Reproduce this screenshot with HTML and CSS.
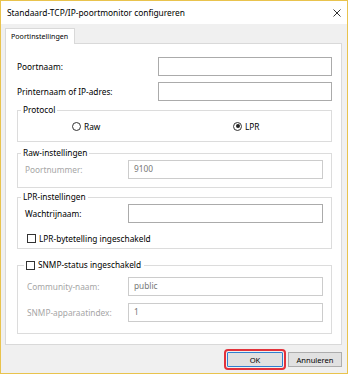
FILE: index.html
```html
<!DOCTYPE html>
<html>
<head>
    <title>Standaard-TCP/IP-poortmonitor configureren</title>
    <link rel="stylesheet" href="styles.css">
</head>
<body>
    <div class="window">
        <div class="titlebar">
            <span class="title">Standaard-TCP/IP-poortmonitor configureren</span>
            <svg class="close" width="8" height="8" viewBox="0 0 8 8">
                <path d="M0.5 0.5 L7.5 7.5 M7.5 0.5 L0.5 7.5" stroke="#333" stroke-width="1" fill="none"/>
            </svg>
        </div>

        <div class="tabs">
            <div class="tab">Poortinstellingen</div>
        </div>

        <div class="panel">
            <div class="row first">
                <span class="label">Poortnaam:</span>
                <div class="field wide"></div>
            </div>
            <div class="row second">
                <span class="label">Printernaam of IP-adres:</span>
                <div class="field wide"></div>
            </div>

            <fieldset class="group protocol">
                <legend>Protocol</legend>
                <div class="radios">
                    <span class="option"><span class="radio"></span>Raw</span>
                    <span class="option"><span class="radio checked"></span>LPR</span>
                </div>
            </fieldset>

            <fieldset class="group raw">
                <legend>Raw-instellingen</legend>
                <div class="body">
                    <div class="row">
                        <span class="label disabled">Poortnummer:</span>
                        <div class="field off">9100</div>
                    </div>
                </div>
            </fieldset>

            <fieldset class="group lpr">
                <legend>LPR-instellingen</legend>
                <div class="body">
                    <div class="row">
                        <span class="label">Wachtrijnaam:</span>
                        <div class="field"></div>
                    </div>
                    <div class="check-row"><span class="checkbox"></span>LPR-bytetelling ingeschakeld</div>
                </div>
            </fieldset>

            <fieldset class="group snmp">
                <legend class="check-legend"><span class="checkbox"></span>SNMP-status ingeschakeld</legend>
                <div class="body">
                    <div class="row">
                        <span class="label disabled">Community-naam:</span>
                        <div class="field off">public</div>
                    </div>
                    <div class="row next">
                        <span class="label disabled">SNMP-apparaatindex:</span>
                        <div class="field off">1</div>
                    </div>
                </div>
            </fieldset>
        </div>

        <div class="footer">
            <button class="btn ok">OK</button>
            <button class="btn cancel">Annuleren</button>
        </div>
    </div>
</body>
</html>
```

FILE: styles.css
```css
body {
    margin: 0;
    font-family: "Noto Sans", "Liberation Sans", sans-serif;
    font-size: 8.3px;
    color: #000;
}

.window {
    width: 348px;
    height: 374px;
    box-sizing: border-box;
    border: 1px solid #e9c34d;
    background-color: #f0f0f0;
    display: flex;
    flex-direction: column;
}

.titlebar {
    height: 23px;
    background-color: #fff;
    display: flex;
    align-items: center;
    justify-content: space-between;
    padding: 0 6px 0 6px;
}
.title {
    font-size: 8.4px;
    color: #000;
}
.close {
    margin-top: 1px;
}

.tabs {
    margin-top: 4px;
    padding-left: 4px;
    display: flex;
}
.tab {
    position: relative;
    z-index: 1;
    height: 15px;
    line-height: 15px;
    margin-bottom: -1px;
    padding: 0 6px 0 5px;
    background-color: #fff;
    border: 1px solid #d9d9d9;
    border-bottom: none;
    font-size: 7.1px;
}

.panel {
    flex: 1;
    margin: 0 5px 0 4px;
    padding: 13px 9px 0 11px;
    background-color: #fff;
    border: 1px solid #d9d9d9;
}

.row {
    display: flex;
    align-items: center;
}
.row .label {
    flex: 1;
}
.row.second {
    margin-top: 6px;
}
.row.next {
    margin-top: 7px;
}

.field {
    box-sizing: border-box;
    width: 195px;
    height: 19px;
    border: 1px solid #ababab;
    background-color: #fff;
    padding: 0 5px;
    line-height: 16px;
}
.field.wide {
    width: 174px;
}
.field.off {
    border-color: #cccccc;
    color: #777;
}
.label.disabled {
    color: #a6a6a6;
}

.group {
    margin: 0;
    padding: 0;
    border: 1px solid #dcdcdc;
    min-width: 0;
}
.group legend {
    margin-left: 3px;
    padding: 0 2px;
    line-height: 12px;
    height: 12px;
}
.group .body {
    padding: 1px 8px 8px 7px;
}

.protocol {
    margin-top: 3px;
}
.radios {
    display: grid;
    grid-template-columns: 161px auto;
    padding: 4px 0 9px 54px;
}
.option {
    display: flex;
    align-items: center;
    height: 12px;
}
.radio {
    box-sizing: border-box;
    width: 9px;
    height: 9px;
    border: 1px solid #333;
    border-radius: 50%;
    margin-right: 3px;
    display: flex;
    align-items: center;
    justify-content: center;
}
.radio.checked::after {
    content: "";
    width: 4px;
    height: 4px;
    border-radius: 50%;
    background-color: #222;
}

.raw {
    margin-top: 5px;
}
.lpr {
    margin-top: 3px;
}
.lpr .body {
    padding-bottom: 4px;
}
.check-row {
    display: flex;
    align-items: center;
    height: 12px;
    margin-top: 9px;
    margin-left: 2px;
}
.checkbox {
    box-sizing: border-box;
    width: 9px;
    height: 9px;
    border: 1px solid #333;
    background-color: #fff;
    margin-right: 3px;
}

.snmp {
    margin-top: 10px;
}
.snmp .check-legend {
    display: flex;
    align-items: center;
    margin-left: 6px;
    padding: 0 3px 0 2px;
}
.snmp .body {
    padding: 6px 8px 11px 9px;
}

.footer {
    height: 28px;
    box-sizing: border-box;
    display: flex;
    justify-content: flex-end;
    gap: 5px;
    padding: 7px 5px 0 0;
}
.btn {
    box-sizing: border-box;
    height: 15px;
    padding: 0;
    font-family: "Noto Sans", "Liberation Sans", sans-serif;
    font-size: 7.6px;
    color: #000;
    background-color: #e1e1e1;
    border: 1px solid #adadad;
    line-height: 12px;
}
.btn.ok {
    width: 56px;
    border-color: #2f7fd0;
    outline: 2px solid #e2313a;
    outline-offset: 1px;
    border-radius: 1px;
}
.btn.cancel {
    width: 54px;
}
```
